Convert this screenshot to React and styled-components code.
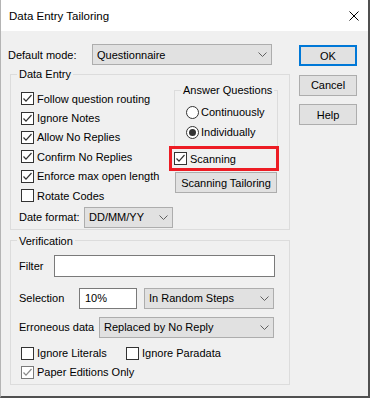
import React from 'react';
import styled, { createGlobalStyle } from 'styled-components';

const GlobalStyle = createGlobalStyle`
  html, body { margin: 0; padding: 0; background: #f0f0f0; }
  body {
    font-family: "Liberation Sans", Arial, sans-serif;
    font-size: 11px;
    color: #000;
  }
  * { box-sizing: border-box; }
`;

const Window = styled.div`
  width: 370px;
  height: 398px;
  display: flex;
  flex-direction: column;
  background: #f0f0f0;
  border-left: 1px solid #b4b4b4;
  border-right: 2px solid #505050;
  border-bottom: 2px solid #505050;
  overflow: hidden;
`;

const TitleBar = styled.div`
  height: 31px;
  flex: none;
  background: #fff;
  display: flex;
  align-items: center;
  justify-content: space-between;
  padding: 0 9px 0 8px;
`;

const Title = styled.span`
  font-size: 11.5px;
`;

const Body = styled.div`
  display: flex;
  padding: 13px 0 0 7px;
`;

const LeftCol = styled.div`
  width: 283px;
  display: flex;
  flex-direction: column;
`;

const FieldRow = styled.div`
  display: flex;
  align-items: center;
  height: ${p => p.$h || 21}px;
  margin-top: ${p => p.$mt || 0}px;
  margin-left: ${p => p.$ml || 0}px;
`;

const Label = styled.span`
  width: ${p => p.$w}px;
  flex: none;
  white-space: nowrap;
`;

const SelectBox = styled.div`
  width: ${p => p.$w}px;
  height: ${p => p.$h || 21}px;
  flex: none;
  background: #e1e1e1;
  border: 1px solid #adadad;
  display: flex;
  align-items: center;
  justify-content: space-between;
  padding: 0 4px 0 4px;
  white-space: nowrap;
`;

const TextBox = styled.div`
  width: ${p => p.$w}px;
  height: ${p => p.$h || 21}px;
  flex: none;
  background: #fff;
  border: 1px solid #7a7a7a;
  display: flex;
  align-items: center;
  padding-left: 5px;
  margin-right: ${p => p.$mr || 0}px;
`;

const Group = styled.fieldset`
  margin: ${p => p.$mt || 0}px 0 0 ${p => p.$ml || 0}px;
  width: ${p => p.$w}px;
  border: 1px solid #dcdcdc;
  padding: 0;
  min-width: 0;
`;

const Legend = styled.legend`
  margin-left: 6px;
  padding: 0 2px;
  line-height: 14px;
  font-size: 11px;
`;

const DataEntryInner = styled.div`
  display: flex;
  padding: 2px 0 1px 10px;
`;

const CheckCol = styled.div`
  width: 153px;
  flex: none;
  display: flex;
  flex-direction: column;
  padding-top: 6px;
`;

const CheckRow = styled.div`
  display: flex;
  align-items: center;
  height: ${p => p.$h || 19.4}px;
  margin-top: ${p => p.$mt || 0}px;
  margin-left: ${p => p.$ml || 0}px;
  white-space: nowrap;
`;

const CheckItem = styled.div`
  display: flex;
  align-items: center;
  width: ${p => (p.$w ? `${p.$w}px` : 'auto')};
  white-space: nowrap;
`;

const Box = styled.span`
  width: 13px;
  height: 13px;
  flex: none;
  background: #fff;
  border: 1px solid ${p => (p.$dim ? '#7a7a7a' : '#333')};
  margin-right: 3px;
  display: flex;
  align-items: center;
  justify-content: center;
`;

const AnswerCol = styled.div`
  display: flex;
  flex-direction: column;
  width: 104px;
`;

const RadioBody = styled.div`
  padding: 5px 0 4px 11px;
  display: flex;
  flex-direction: column;
`;

const RadioRow = styled.div`
  display: flex;
  align-items: center;
  height: 20px;
  white-space: nowrap;
`;

const RadioCircle = styled.span`
  width: 13px;
  height: 13px;
  flex: none;
  border-radius: 50%;
  border: 1px solid #333;
  background: #fff;
  margin-right: 2px;
  display: flex;
  align-items: center;
  justify-content: center;
  &::after {
    content: '';
    width: 7px;
    height: 7px;
    border-radius: 50%;
    background: ${p => (p.$on ? '#333' : 'transparent')};
  }
`;

const Highlight = styled.div`
  margin: 2px 0 0 -2px;
  width: 104px;
  height: 19px;
  padding-left: 2px;
  display: flex;
  align-items: center;
  outline: 3px solid #ed1c24;
`;

const Button = styled.div`
  width: ${p => p.$w || 58}px;
  height: 21px;
  flex: none;
  background: #e1e1e1;
  border: ${p => (p.$default ? '2px solid #0078d7' : '1px solid #adadad')};
  display: flex;
  align-items: center;
  justify-content: center;
  white-space: nowrap;
  margin: ${p => p.$m || '0'};
`;

const VerifyInner = styled.div`
  display: flex;
  flex-direction: column;
  padding: 7px 0 2px 8px;
`;

const ButtonCol = styled.div`
  display: flex;
  flex-direction: column;
  gap: 8.5px;
  margin-left: 8px;
  padding-top: 1px;
`;

const Chevron = () => (
  <svg width="9" height="5" viewBox="0 0 9 5">
    <polyline points="0.5,0.5 4.5,4.5 8.5,0.5" fill="none" stroke="#606060" strokeWidth="1" />
  </svg>
);

const CheckMark = ({ color }) => (
  <svg width="11" height="11" viewBox="0 0 11 11">
    <polyline points="1.5,5.5 4,8.2 9.5,2" fill="none" stroke={color} strokeWidth="1.2" />
  </svg>
);

const Check = ({ checked, dim, children, w }) => (
  <CheckItem $w={w}>
    <Box $dim={dim}>{checked && <CheckMark color={dim ? '#8a8a8a' : '#333'} />}</Box>
    {children}
  </CheckItem>
);

const Select = ({ w, h, children }) => (
  <SelectBox $w={w} $h={h}>
    <span>{children}</span>
    <Chevron />
  </SelectBox>
);

export default function App() {
  return (
    <>
      <GlobalStyle />
      <Window>
        <TitleBar>
          <Title>Data Entry Tailoring</Title>
          <svg width="10" height="10" viewBox="0 0 10 10">
            <path d="M0.5 0.5 L9.5 9.5 M9.5 0.5 L0.5 9.5" stroke="#000" strokeWidth="1" />
          </svg>
        </TitleBar>
        <Body>
          <LeftCol>
            <FieldRow>
              <Label $w={84}>Default mode:</Label>
              <Select w={180}>Questionnaire</Select>
            </FieldRow>

            <Group $mt={2} $ml={2} $w={280}>
              <Legend>Data Entry</Legend>
              <DataEntryInner>
                <CheckCol>
                  <CheckRow><Check checked>Follow question routing</Check></CheckRow>
                  <CheckRow><Check checked>Ignore Notes</Check></CheckRow>
                  <CheckRow><Check checked>Allow No Replies</Check></CheckRow>
                  <CheckRow><Check checked>Confirm No Replies</Check></CheckRow>
                  <CheckRow><Check checked>Enforce max open length</Check></CheckRow>
                  <CheckRow><Check>Rotate Codes</Check></CheckRow>
                  <FieldRow $mt={1.6} $ml={-2}>
                    <Label $w={65}>Date format:</Label>
                    <Select w={89}>DD/MM/YY</Select>
                  </FieldRow>
                </CheckCol>
                <AnswerCol>
                  <Group $w={104}>
                    <Legend>Answer Questions</Legend>
                    <RadioBody>
                      <RadioRow><RadioCircle />Continuously</RadioRow>
                      <RadioRow><RadioCircle $on />Individually</RadioRow>
                    </RadioBody>
                  </Group>
                  <Highlight>
                    <Check checked>Scanning</Check>
                  </Highlight>
                  <Button $w={102} $m="4px 0 0 1px">Scanning Tailoring</Button>
                </AnswerCol>
              </DataEntryInner>
            </Group>

            <Group $mt={4} $ml={2} $w={280}>
              <Legend>Verification</Legend>
              <VerifyInner>
                <FieldRow $h={22}>
                  <Label $w={35}>Filter</Label>
                  <TextBox $w={221} $h={22} />
                </FieldRow>
                <FieldRow $mt={11}>
                  <Label $w={60}>Selection</Label>
                  <TextBox $w={58} $mr={7}>10%</TextBox>
                  <Select w={130}>In Random Steps</Select>
                </FieldRow>
                <FieldRow $mt={8}>
                  <Label $w={80}>Erroneous data</Label>
                  <Select w={175}>Replaced by No Reply</Select>
                </FieldRow>
                <CheckRow $h={19} $mt={6} $ml={2}>
                  <Check w={105}>Ignore Literals</Check>
                  <Check>Ignore Paradata</Check>
                </CheckRow>
                <CheckRow $h={19} $ml={2}>
                  <Check checked dim>Paper Editions Only</Check>
                </CheckRow>
              </VerifyInner>
            </Group>
          </LeftCol>

          <ButtonCol>
            <Button $default>OK</Button>
            <Button>Cancel</Button>
            <Button>Help</Button>
          </ButtonCol>
        </Body>
      </Window>
    </>
  );
}
